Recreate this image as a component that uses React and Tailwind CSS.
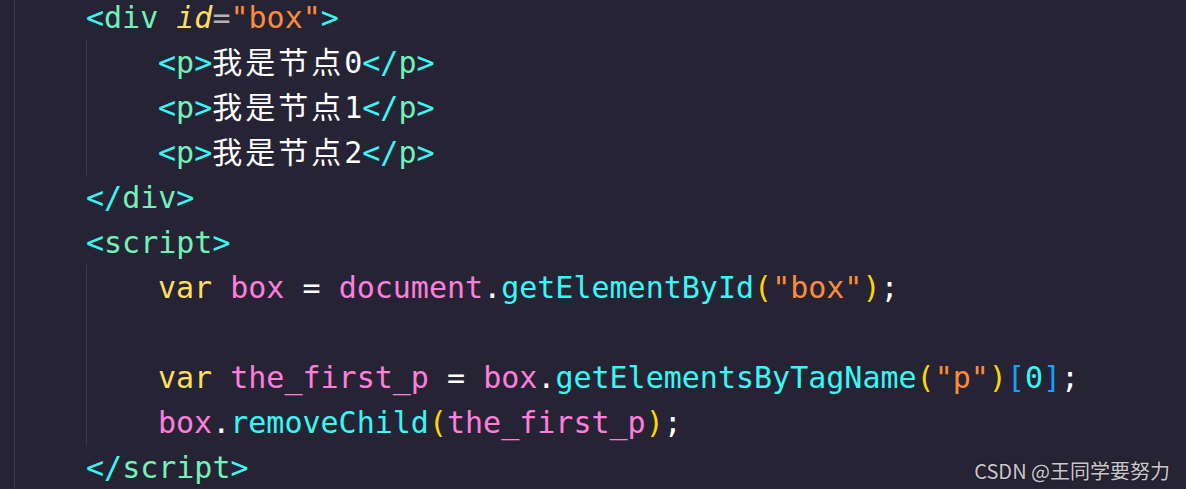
import React from "react";

const C = {
  br: "text-[#36f9f6]",
  tag: "text-[#72f1b8]",
  attr: "text-[#fede5d] italic",
  eq: "text-[#b6b1b1]",
  str: "text-[#ff8b39]",
  txt: "text-[#ffffff]",
  kw: "text-[#fede5d]",
  id: "text-[#ff7edb]",
  op: "text-[#ffffff]",
  fn: "text-[#36f9f6]",
  par: "text-[#ffd700]",
  sq: "text-[#179fff]",
  num: "text-[#36f9f6]",
};

function T({ c, children }) {
  return <span className={c}>{children}</span>;
}

function Cjk({ children }) {
  return (
    <span className="tracking-[3px] text-white leading-none" style={{ fontFamily: '"Noto Sans CJK SC", sans-serif' }}>
      {children}
    </span>
  );
}

function Line({ children }) {
  return <div className="h-[45px] leading-[45px] whitespace-pre">{children}</div>;
}

function PLine({ n }) {
  return (
    <Line>
      <T c={C.br}>&lt;</T>
      <T c={C.tag}>p</T>
      <T c={C.br}>&gt;</T>
      <Cjk>我是节点</Cjk>
      <T c={C.txt}>{n}</T>
      <T c={C.br}>&lt;/</T>
      <T c={C.tag}>p</T>
      <T c={C.br}>&gt;</T>
    </Line>
  );
}

export default function App() {
  return (
    <div
      className="relative w-[1186px] h-[489px] overflow-hidden bg-[#262335] pl-[14px] text-[30px]"
      style={{ fontFamily: '"DejaVu Sans Mono", "Noto Sans CJK SC", monospace' }}
    >
      <div className="-mt-[5px] min-h-[520px] border-l border-[#3e3a52] pl-[71px]">
        <Line>
          <T c={C.br}>&lt;</T>
          <T c={C.tag}>div</T> <T c={C.attr}>id</T>
          <T c={C.eq}>=</T>
          <T c={C.str}>"box"</T>
          <T c={C.br}>&gt;</T>
        </Line>
        <div className="border-l border-[#3e3a52] pl-[71px]">
          <PLine n="0" />
          <PLine n="1" />
          <PLine n="2" />
        </div>
        <Line>
          <T c={C.br}>&lt;/</T>
          <T c={C.tag}>div</T>
          <T c={C.br}>&gt;</T>
        </Line>
        <Line>
          <T c={C.br}>&lt;</T>
          <T c={C.tag}>script</T>
          <T c={C.br}>&gt;</T>
        </Line>
        <div className="border-l border-[#3e3a52] pl-[71px]">
          <Line>
            <T c={C.kw}>var</T> <T c={C.id}>box</T> <T c={C.op}>=</T> <T c={C.id}>document</T>
            <T c={C.op}>.</T>
            <T c={C.fn}>getElementById</T>
            <T c={C.par}>(</T>
            <T c={C.str}>"box"</T>
            <T c={C.par}>)</T>
            <T c={C.op}>;</T>
          </Line>
          <Line> </Line>
          <Line>
            <T c={C.kw}>var</T> <T c={C.id}>the_first_p</T> <T c={C.op}>=</T> <T c={C.id}>box</T>
            <T c={C.op}>.</T>
            <T c={C.fn}>getElementsByTagName</T>
            <T c={C.par}>(</T>
            <T c={C.str}>"p"</T>
            <T c={C.par}>)</T>
            <T c={C.sq}>[</T>
            <T c={C.num}>0</T>
            <T c={C.sq}>]</T>
            <T c={C.op}>;</T>
          </Line>
          <Line>
            <T c={C.id}>box</T>
            <T c={C.op}>.</T>
            <T c={C.fn}>removeChild</T>
            <T c={C.par}>(</T>
            <T c={C.id}>the_first_p</T>
            <T c={C.par}>)</T>
            <T c={C.op}>;</T>
          </Line>
        </div>
        <Line>
          <T c={C.br}>&lt;/</T>
          <T c={C.tag}>script</T>
          <T c={C.br}>&gt;</T>
        </Line>
      </div>
      <div
        className="absolute right-[16px] bottom-[8px] text-[20px] leading-none text-[#c9c9cc] [text-shadow:0_0_2px_rgba(0,0,0,0.6)]"
        style={{ fontFamily: '"Noto Sans CJK SC", sans-serif' }}
      >
        CSDN @王同学要努力
      </div>
    </div>
  );
}
